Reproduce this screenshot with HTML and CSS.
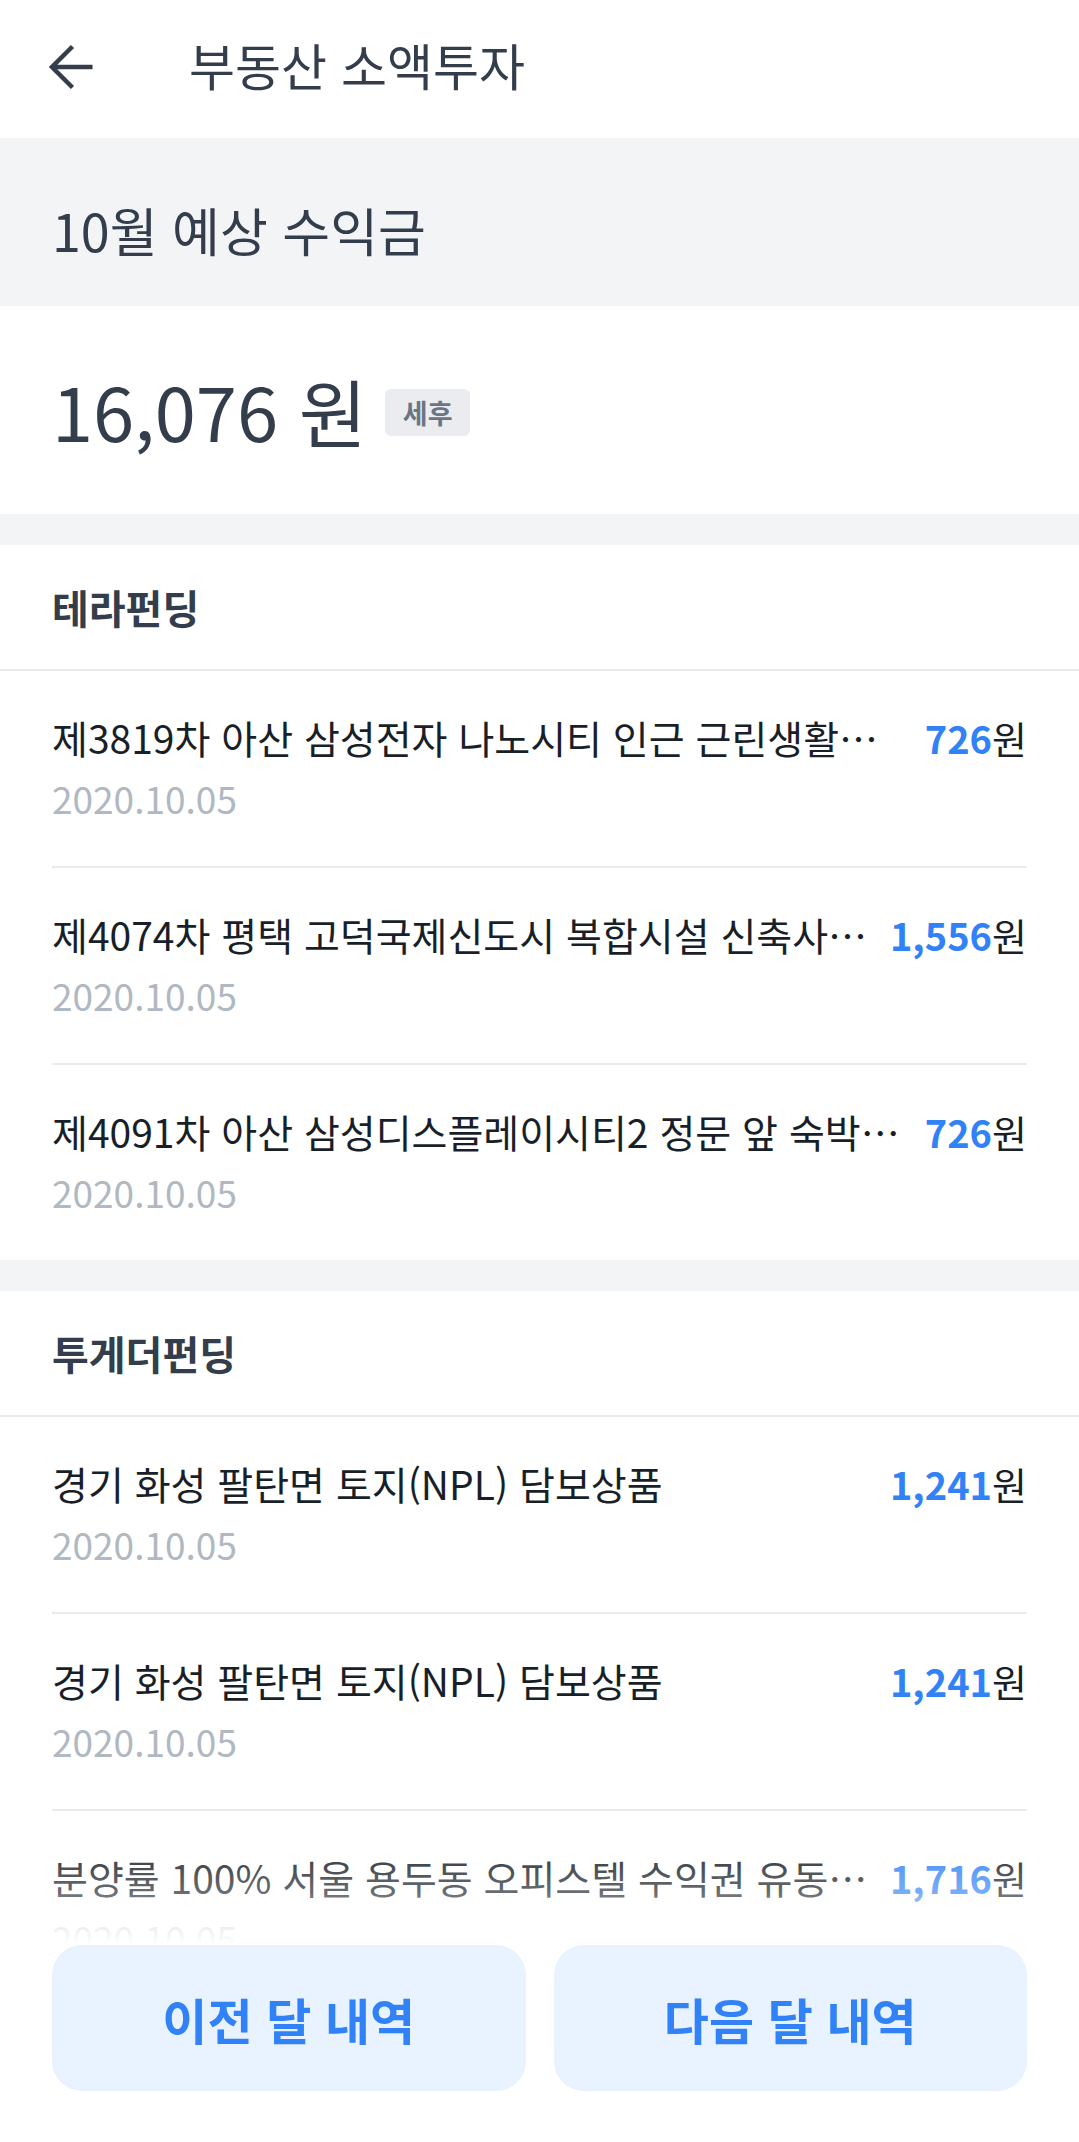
FILE: index.html
```html
<!DOCTYPE html>
<html lang="ko">
<head>
    <meta charset="UTF-8">
    <meta name="viewport" content="width=device-width, initial-scale=1.0">
    <title>부동산 소액투자</title>
    <link rel="stylesheet" href="styles.css">
</head>
<body>
    <div class="screen">
        <header class="app-bar">
            <button class="back-btn" aria-label="뒤로">
                <svg viewBox="0 0 24 24" width="60" height="60" fill="none" stroke="#333d4b" stroke-width="1.8" stroke-linecap="butt" stroke-linejoin="miter">
                    <path d="M20.2 12H4.4"/>
                    <path d="M12.2 3.8L4 12l8.2 8.2"/>
                </svg>
            </button>
            <h1 class="app-title">부동산 소액투자</h1>
        </header>

        <section class="summary">
            <div class="summary-label">10월 예상 수익금</div>
            <div class="summary-total">
                <span class="total-value">16,076 원</span>
                <span class="tag">세후</span>
            </div>
        </section>

        <section class="group">
            <h2 class="group-title">테라펀딩</h2>
            <ul class="item-list">
                <li class="item">
                    <div class="item-row">
                        <span class="item-name">제3819차 아산 삼성전자 나노시티 인근 근린생활…</span>
                        <span class="item-amount"><b>726</b>원</span>
                    </div>
                    <div class="item-date">2020.10.05</div>
                </li>
                <li class="item">
                    <div class="item-row">
                        <span class="item-name">제4074차 평택 고덕국제신도시 복합시설 신축사…</span>
                        <span class="item-amount"><b>1,556</b>원</span>
                    </div>
                    <div class="item-date">2020.10.05</div>
                </li>
                <li class="item">
                    <div class="item-row">
                        <span class="item-name">제4091차 아산 삼성디스플레이시티2 정문 앞 숙박…</span>
                        <span class="item-amount"><b>726</b>원</span>
                    </div>
                    <div class="item-date">2020.10.05</div>
                </li>
            </ul>
        </section>

        <section class="group">
            <h2 class="group-title">투게더펀딩</h2>
            <ul class="item-list">
                <li class="item">
                    <div class="item-row">
                        <span class="item-name">경기 화성 팔탄면 토지(NPL) 담보상품</span>
                        <span class="item-amount"><b>1,241</b>원</span>
                    </div>
                    <div class="item-date">2020.10.05</div>
                </li>
                <li class="item">
                    <div class="item-row">
                        <span class="item-name">경기 화성 팔탄면 토지(NPL) 담보상품</span>
                        <span class="item-amount"><b>1,241</b>원</span>
                    </div>
                    <div class="item-date">2020.10.05</div>
                </li>
                <li class="item">
                    <div class="item-row">
                        <span class="item-name">분양률 100% 서울 용두동 오피스텔 수익권 유동…</span>
                        <span class="item-amount"><b>1,716</b>원</span>
                    </div>
                    <div class="item-date">2020.10.05</div>
                </li>
            </ul>
        </section>

        <div class="bottom-bar">
            <button class="month-btn">이전 달 내역</button>
            <button class="month-btn">다음 달 내역</button>
        </div>
    </div>
</body>
</html>
```

FILE: styles.css
```css
* {
    box-sizing: border-box;
}
body {
    margin: 0;
    font-family: 'Noto Sans CJK KR', 'Noto Sans', sans-serif;
    background-color: #f2f4f6;
    color: #191f28;
}
.screen {
    position: relative;
    height: 2142px;
    overflow: hidden;
    background-color: #f2f4f6;
}
.app-bar {
    display: flex;
    align-items: center;
    height: 138px;
    padding: 0 0 4px 42px;
    background-color: #ffffff;
}
.back-btn {
    display: flex;
    padding: 0;
    border: none;
    background: none;
}
.app-title {
    margin: 0 0 6px 87px;
    font-size: 50px;
    font-weight: 400;
    color: #333d4b;
    line-height: 1;
}
.summary-label {
    padding: 58px 52px 43px;
    font-size: 52px;
    line-height: 67px;
    color: #333d4b;
}
.summary-total {
    display: flex;
    align-items: center;
    gap: 18px;
    padding: 62px 52px;
    background-color: #ffffff;
}
.total-value {
    font-size: 74px;
    line-height: 84px;
    color: #333d4b;
}
.tag {
    padding: 4px 18px;
    border-radius: 6px;
    background-color: #eaecef;
    color: #6b7684;
    font-size: 27px;
    font-weight: 700;
    line-height: 39px;
    margin-top: 4px;
}
.group {
    margin-top: 31px;
    background-color: #ffffff;
}
.group-title {
    margin: 0;
    padding: 37px 52px;
    font-size: 40px;
    font-weight: 700;
    line-height: 50px;
    color: #333d4b;
    border-bottom: 2px solid #e9ecef;
}
.item-list {
    list-style: none;
    margin: 0;
    padding: 0;
}
.item {
    margin: 0 52px;
    padding: 41px 0 45px;
    border-bottom: 2px solid #e9ecef;
}
.item:last-child {
    border-bottom: none;
}
.item-row {
    display: flex;
    align-items: baseline;
    gap: 14px;
}
.item-name {
    flex: 1;
    font-size: 39px;
    line-height: 50px;
    white-space: nowrap;
    color: #191f28;
}
.item-amount {
    font-size: 38px;
    line-height: 50px;
    color: #191f28;
}
.item-amount b {
    color: #3182f6;
    font-weight: 700;
}
.item-date {
    margin-top: 12px;
    font-size: 37px;
    line-height: 46px;
    color: #b0b8c1;
}
.bottom-bar {
    position: absolute;
    left: 0;
    right: 0;
    bottom: 0;
    display: grid;
    grid-template-columns: 1fr 1fr;
    gap: 28px;
    padding: 0 52px 51px;
    background-color: #ffffff;
}
.bottom-bar::before {
    content: "";
    position: absolute;
    left: 0;
    right: 0;
    bottom: 100%;
    height: 115px;
    background: linear-gradient(rgba(255, 255, 255, 0), rgba(255, 255, 255, 0.35) 55%, #ffffff);
}
.month-btn {
    height: 146px;
    border: none;
    border-radius: 30px;
    background-color: #e8f3ff;
    color: #3182f6;
    font-family: inherit;
    font-size: 49px;
    font-weight: 700;
}
```
